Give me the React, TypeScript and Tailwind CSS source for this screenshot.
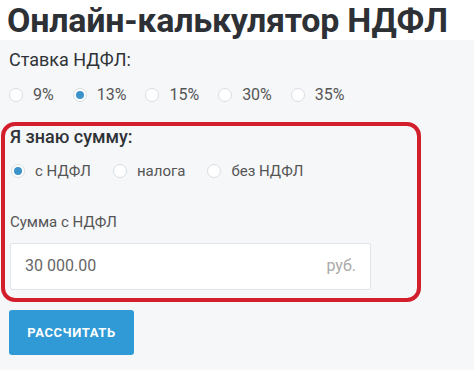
import { useState } from 'react';

const rates = ['9%', '13%', '15%', '30%', '35%'];
const modes = ['с НДФЛ', 'налога', 'без НДФЛ'];

function Radio({ checked, label, onClick }: { checked: boolean; label: string; onClick: () => void }) {
  return (
    <label onClick={onClick} className="flex items-center gap-[10px] cursor-pointer">
      <span className="w-[14px] h-[14px] rounded-full border border-[#d9dde2] bg-white flex items-center justify-center">
        {checked && <span className="w-[8px] h-[8px] rounded-full bg-[#3b93c9]" />}
      </span>
      <span>{label}</span>
    </label>
  );
}

export default function App() {
  const [rate, setRate] = useState('13%');
  const [mode, setMode] = useState('с НДФЛ');

  return (
    <div className="w-[474px] h-[370px] bg-[#f6f7f9] font-['Roboto',sans-serif] text-[#333] overflow-hidden">
      {/* Title */}
      <div className="bg-white h-[40px] pl-[7px]">
        <h1 className="whitespace-nowrap text-[34px] leading-[40px] font-bold text-[#2d3136] tracking-[-0.25px]">Онлайн-калькулятор НДФЛ</h1>
      </div>

      <div className="pl-[9px] pt-[9px]">
        <div className="text-[18px] leading-[22px] text-[#2f3337]">Ставка НДФЛ:</div>
        <div className="flex items-center gap-[19px] mt-[12px] ml-[0px] text-[16px] text-[#555]">
          {rates.map((r) => (
            <Radio key={r} label={r} checked={rate === r} onClick={() => setRate(r)} />
          ))}
        </div>
      </div>

      {/* Highlighted block */}
      <div className="mt-[15px] ml-[1px] w-[420px] h-[180px] border-[4px] border-[#d21f2b] rounded-[14px] pl-[5px]">
        <div className="text-[18px] leading-[22px] font-medium text-[#2f3337]">Я знаю сумму:</div>
        <div className="flex items-center gap-[22px] mt-[12px] ml-[1px] text-[15px] text-[#555]">
          {modes.map((m) => (
            <Radio key={m} label={m} checked={mode === m} onClick={() => setMode(m)} />
          ))}
        </div>
        <div className="mt-[30px] text-[15px] leading-[18px] text-[#555]">Сумма с НДФЛ</div>
        <div className="mt-[12px] w-[361px] h-[47px] bg-white border border-[#e1e4ea] rounded-[2px] flex items-center justify-between px-[14px] text-[16px]">
          <span className="text-[#666]">30 000.00</span>
          <span className="text-[#aaa]">руб.</span>
        </div>
      </div>

      <button className="mt-[8px] ml-[9px] w-[125px] h-[45px] bg-[#2f9ad5] rounded-[3px] text-white text-[13px] font-bold tracking-[0.6px]">
        РАССЧИТАТЬ
      </button>
    </div>
  );
}
